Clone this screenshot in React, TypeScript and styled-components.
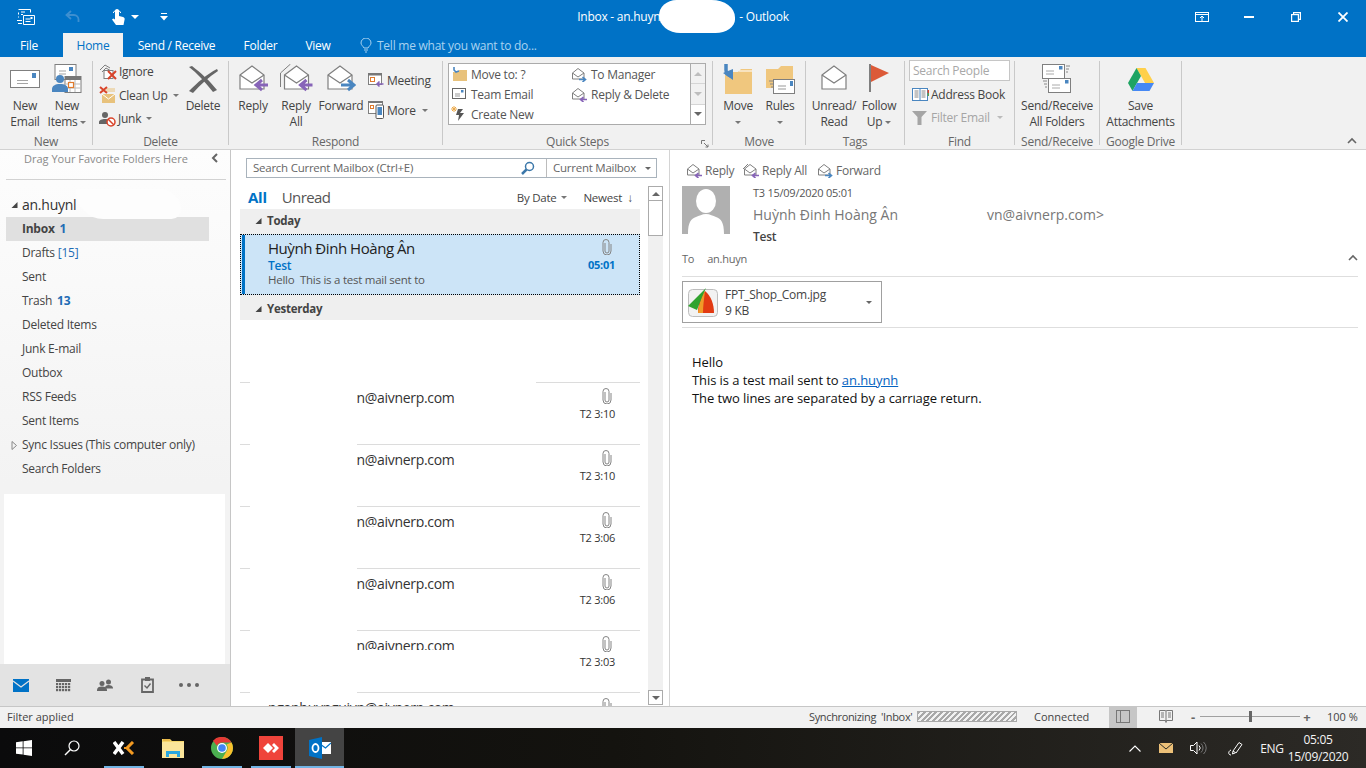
import React from "react";
import styled, { createGlobalStyle } from "styled-components";

const GlobalStyle = createGlobalStyle`
  html, body { margin: 0; padding: 0; width: 1366px; height: 768px; overflow: hidden; background: #fff; }
  body { font-family: "Open Sans", "Noto Sans", sans-serif; font-size: 12px; letter-spacing: -0.25px; color: #444; }
  #root { width: 1366px; height: 768px; }
  * { box-sizing: border-box; }
  svg { display: block; flex: none; }
`;

const Window = styled.div`display:flex;flex-direction:column;width:1366px;height:768px;overflow:hidden;`;

/* ---------- title bar ---------- */
const TitleBar = styled.div`display:grid;grid-template-columns:1fr auto 1fr;height:33px;background:#0072c6;color:#fff;align-items:center;`;
const Qat = styled.div`display:flex;align-items:center;`;
const QatItem = styled.span<{ $ml: number }>`margin-left:${p => p.$ml}px;display:flex;`;
const Title = styled.div`display:flex;align-items:center;font-size:12px;height:33px;color:#fff;white-space:nowrap;`;
const TitleBlob = styled.span`width:76px;height:33px;background:#fff;border-radius:18px 24px 20px 22px / 16px 18px 14px 18px;margin:0 4px 0 -1px;flex:none;`;
const WinControls = styled.div`display:flex;justify-content:flex-end;`;
const WinBtn = styled.div`width:47px;height:33px;display:flex;align-items:center;justify-content:center;`;

/* ---------- tabs ---------- */
const TabBar = styled.div`display:flex;height:24px;background:#0072c6;align-items:stretch;`;
const Tab = styled.div<{ $w: number; $active?: boolean; $ml?: number }>`
  width:${p => p.$w}px;margin-left:${p => p.$ml ?? 0}px;display:flex;align-items:center;justify-content:center;
  font-size:12px;color:${p => (p.$active ? "#0072c6" : "#fff")};background:${p => (p.$active ? "#f1f1f1" : "transparent")};
`;
const TellMe = styled.div`margin-left:15px;display:flex;align-items:center;gap:5px;color:#a9d2f0;font-size:12px;`;

/* ---------- ribbon ---------- */
const Ribbon = styled.div`display:flex;height:93px;padding-top:4px;background:#f1f1f1;border-bottom:1px solid #d2d2d2;flex:none;`;
const Group = styled.div<{ $w: number }>`position:relative;width:${p => p.$w}px;height:84px;border-right:1px solid #c9c9c9;flex:none;`;
const GroupBody = styled.div<{ $pl?: number }>`display:flex;height:72px;padding-left:${p => p.$pl ?? 0}px;`;
const GroupLabel = styled.div`height:12px;line-height:17px;text-align:center;font-size:12px;color:#666;white-space:nowrap;`;
const Launcher = styled.span`position:absolute;right:3px;bottom:-3px;`;
const LargeBtn = styled.div<{ $w: number }>`display:flex;flex-direction:column;align-items:center;width:${p => p.$w}px;margin-top:3px;flex:none;`;
const LargeIcon = styled.div<{ $pt?: number }>`height:34px;padding-top:${p => p.$pt ?? 0}px;display:flex;align-items:flex-start;justify-content:center;`;
const LargeText = styled.div`line-height:16px;text-align:center;font-size:12px;color:#444;white-space:nowrap;`;
const Caret = styled.span<{ $c?: string; $ml?: number }>`
  display:inline-block;vertical-align:middle;margin-left:${p => p.$ml ?? 3}px;width:0;height:0;
  border-left:3px solid transparent;border-right:3px solid transparent;border-top:3px solid ${p => p.$c ?? "#777"};
`;
const SmallCol = styled.div<{ $w: number; $pl?: number; $pt?: number; $mt?: number; $rh?: number }>`
  display:flex;flex-direction:column;width:${p => p.$w}px;padding-left:${p => p.$pl ?? 0}px;padding-top:${p => p.$pt ?? 0}px;margin-top:${p => p.$mt ?? 0}px;flex:none;
  & > div { height:${p => p.$rh ?? 23}px; }
`;
const SmallRow = styled.div<{ $muted?: boolean; $gap?: number; $pl?: number }>`
  display:flex;align-items:center;gap:${p => p.$gap ?? 2}px;padding-left:${p => p.$pl ?? 0}px;font-size:12px;white-space:nowrap;color:${p => (p.$muted ? "#a5a5a5" : "#444")};
`;
const Gallery = styled.div`display:flex;margin:2px 0 0 5px;width:258px;height:62px;border:1px solid #ababab;background:#fff;`;
const GalleryGrid = styled.div`display:grid;grid-template-columns:120px 1fr;grid-auto-rows:20px;flex:1;padding:0 0 0 2px;`;
const GalleryItem = styled.div`display:flex;align-items:center;gap:3px;font-size:12px;color:#555;white-space:nowrap;`;
const GalleryScroll = styled.div`width:15px;display:flex;flex-direction:column;border-left:1px solid #ababab;background:#f1f1f1;`;
const GalleryArrow = styled.div<{ $white?: boolean }>`flex:1;display:flex;align-items:center;justify-content:center;background:${p => (p.$white ? "#fff" : "#f1f1f1")};border-bottom:1px solid #d5d5d5;&:last-child{border-bottom:0;}`;
const SearchPeople = styled.div`&&{height:21px;}margin:-1px 0 2px;width:101px;border:1px solid #c6c6c6;background:#fff;color:#a8a8a8;font-size:12px;line-height:19px;padding-left:3px;`;
const Collapse = styled.div`margin-left:auto;margin-right:9px;align-self:flex-end;margin-bottom:3px;`;

/* ---------- main ---------- */
const Main = styled.div`display:grid;grid-template-columns:231px 439px 696px;height:556px;flex:none;overflow:hidden;`;

const Nav = styled.div`display:flex;flex-direction:column;border-right:1px solid #c6c6c6;background:linear-gradient(#fdfdfd,#f3f3f3 60%);height:556px;`;
const Favorites = styled.div`height:29.5px;margin:0 4px 0 6px;padding:0 6px 12px 18px;border-bottom:1px solid #d2d2d2;color:#8a8a8a;font-size:11px;letter-spacing:0;display:flex;align-items:center;justify-content:space-between;`;
const Account = styled.div`position:relative;display:flex;align-items:center;gap:4px;height:23px;margin:13px 0 1px 11px;font-size:14px;color:#333;`;
const AccountBlob = styled.span`position:absolute;left:65px;top:-4px;width:105px;height:30px;background:#fdfdfd;border-radius:0 30px 14px 40px;z-index:1;`;
const FolderList = styled.div`display:flex;flex-direction:column;`;
const Folder = styled.div<{ $active?: boolean }>`
  display:flex;align-items:center;position:relative;height:24px;width:203px;margin-left:6px;padding-left:16px;gap:5px;white-space:nowrap;
  font-size:12px;color:#444;background:${p => (p.$active ? "#e0e0e0" : "transparent")};font-weight:${p => (p.$active ? 700 : 400)};
`;
const Count = styled.span`color:#1f6db5;font-weight:700;`;
const Draft = styled.span`color:#1f6db5;margin-left:-2px;`;
const Expander = styled.span`position:absolute;left:5px;top:8px;`;
const WhiteBox = styled.div`flex:1;margin:13px 5px 0 4px;background:#fff;`;
const BottomNav = styled.div`display:flex;height:42px;background:#e3e3e3;flex:none;`;
const BottomItem = styled.div`width:42px;display:flex;align-items:center;justify-content:center;`;

const ListPane = styled.div`display:flex;flex-direction:column;border-right:1px solid #d4d4d4;background:#fff;height:556px;`;
const SearchWrap = styled.div`height:36px;padding:8px 0 0 15px;flex:none;`;
const SearchBox = styled.div`display:flex;align-items:center;width:411px;height:20px;border:1px solid #a9b3bc;font-size:11.5px;color:#666;`;
const SearchText = styled.div`flex:1;padding:0 0 2px 6px;`;
const SearchScope = styled.div`width:110px;height:18px;border-left:1px solid #bcbcbc;padding:0 5px 0 6px;display:flex;align-items:center;justify-content:space-between;line-height:18px;`;
const SearchGlass = styled.span`margin-right:11px;`;
const ListBody = styled.div`display:flex;padding-left:9px;height:520px;`;
const Messages = styled.div`width:400px;height:520px;overflow:hidden;flex:none;`;
const FilterRow = styled.div`display:flex;align-items:center;height:23px;padding:0 7px 1px 8px;`;
const FilterAll = styled.span`font-size:15px;font-weight:700;color:#0072c6;`;
const FilterUnread = styled.span`font-size:15px;color:#555;margin-left:15px;flex:1;letter-spacing:-0.6px;`;
const SortLabel = styled.span<{ $ml?: number }>`display:inline-flex;align-items:center;font-size:11.5px;color:#444;margin-left:${p => p.$ml ?? 0}px;`;
const GroupHeader = styled.div<{ $pb: number; $pt?: number }>`display:flex;align-items:center;gap:5px;height:25px;padding:${p => p.$pt ?? 0}px 0 ${p => p.$pb}px 15px;background:#efefef;font-weight:700;font-size:11.5px;color:#444;`;
const Selected = styled.div`position:relative;display:flex;justify-content:space-between;height:61px;background:#cce4f7;outline:1px dotted #000;outline-offset:-1px;padding:4px 25px 0 28px;
  &::before{content:"";position:absolute;left:2px;top:1px;bottom:1px;width:3px;background:#0072c6;}`;
const SelName = styled.div`font-size:15px;line-height:20px;color:#222;letter-spacing:-0.45px;`;
const SelSubject = styled.div`font-size:12px;line-height:16px;color:#0072c6;font-weight:600;`;
const SelPreview = styled.div`font-size:11.5px;line-height:16px;color:#555;margin-top:-2px;`;
const RowRight = styled.div`display:flex;flex-direction:column;align-items:flex-end;`;
const SelRight = styled(RowRight)`margin-top:1px;`;
const ClipSlot = styled.div`height:16px;margin:0 3px 2px 0;`;
const SelTime = styled.div`font-size:11px;line-height:16px;color:#0072c6;font-weight:700;`;
const RowGap = styled.div`height:62px;`;
const MailRow = styled.div`position:relative;display:flex;justify-content:space-between;height:62px;border-top:1px solid #dcdcdc;padding:5px 25px 0 28px;`;
const RowMask = styled.span<{ $w: number; $h: number }>`position:absolute;left:10px;top:-1px;width:${p => p.$w}px;height:${p => p.$h}px;background:#fff;`;
const Sender = styled.div<{ $h?: number }>`font-size:14px;line-height:20px;color:#333;white-space:nowrap;height:${p => p.$h ?? 20}px;overflow:hidden;letter-spacing:-0.3px;`;
const RowTime = styled.div`font-size:11px;line-height:16px;color:#333;`;
const Scroll = styled.div`display:flex;flex-direction:column;width:15px;height:519px;margin-left:8px;background:#f0f0f0;`;
const ScrollBtn = styled.div`height:15px;border:1px solid #ababab;background:#fff;display:flex;align-items:center;justify-content:center;flex:none;`;
const ScrollThumb = styled.div`height:35px;background:#fff;border:1px solid #ababab;border-top:0;flex:none;`;
const ScrollTrack = styled.div`flex:1;`;
const TriUp = styled.span`width:0;height:0;border-left:4px solid transparent;border-right:4px solid transparent;border-bottom:4px solid #666;`;
const TriDown = styled.span`width:0;height:0;border-left:4px solid transparent;border-right:4px solid transparent;border-top:4px solid #666;`;
const TriUpFaint = styled(TriUp)`border-bottom-color:#bdbdbd;`;
const TriDownFaint = styled(TriDown)`border-top-color:#bdbdbd;`;

const Reading = styled.div`display:flex;flex-direction:column;padding:0 8px 0 12px;background:#fff;height:556px;`;
const Actions = styled.div`display:flex;align-items:center;height:36px;padding:14px 0 9px 4px;flex:none;`;
const Action = styled.div<{ $w: number }>`display:flex;align-items:center;gap:2px;width:${p => p.$w}px;font-size:12px;color:#666;white-space:nowrap;`;
const Header = styled.div`display:flex;height:48px;flex:none;`;
const Avatar = styled.div`width:48px;height:48px;background:#b0b0b0;flex:none;`;
const HeaderText = styled.div`margin-left:23px;display:flex;flex-direction:column;flex:1;`;
const DateText = styled.div`font-size:11px;line-height:14px;color:#555;`;
const SenderLine = styled.div`display:flex;font-size:14px;line-height:22px;margin-top:4px;color:#777;white-space:nowrap;letter-spacing:0;`;
const SenderMail = styled.span`margin-left:89px;`;
const SubjectLine = styled.div`font-size:12px;line-height:16px;margin-top:3px;color:#444;font-weight:600;`;
const ToRow = styled.div`display:flex;align-items:center;height:22px;margin-top:14px;padding-bottom:2px;font-size:11px;color:#666;flex:none;`;
const ToName = styled.span`margin-left:13px;flex:1;`;
const Rule = styled.div`height:1px;background:#dedede;margin-top:6px;flex:none;`;
const Attachment = styled.div`display:flex;align-items:center;width:200px;height:42px;margin-top:4px;border:1px solid #a0a0a0;padding:0 9px 0 4px;flex:none;`;
const AttachText = styled.div`flex:1;margin-left:6px;padding-top:2px;font-size:12px;line-height:16px;color:#444;`;
const Rule2 = styled(Rule)`margin-top:4px;`;
const Body = styled.div`padding:25px 0 0 10px;font-size:13px;line-height:18px;color:#111;letter-spacing:-0.08px;`;
const BodyLink = styled.span`color:#0563c1;text-decoration:underline;`;
const BodyMaskWrap = styled.span`position:relative;`;
const BodyMask = styled.span`position:absolute;left:16px;top:-1px;width:60px;height:7px;background:#fff;`;

/* ---------- status ---------- */
const Status = styled.div`display:flex;align-items:center;height:22px;padding:0 9px 2px 7px;border-top:1px solid #c6c6c6;background:#f1f1f1;font-size:11px;color:#444;flex:none;letter-spacing:0;`;
const StatusLeft = styled.div`margin-right:auto;`;
const SyncText = styled.div`width:108px;white-space:nowrap;letter-spacing:-0.35px;`;
const SyncBar = styled.div`width:100px;height:11px;border:1px solid #a8a8a8;background:repeating-linear-gradient(135deg,#a8a8a8 0 2px,#f1f1f1 2px 4px);`;
const Connected = styled.div`width:75px;margin-left:17px;`;
const ViewBtn = styled.div<{ $on?: boolean; $ml?: number }>`display:flex;align-items:center;justify-content:center;width:28px;height:21px;margin:0 0 -2px ${p => p.$ml ?? 0}px;padding-bottom:2px;background:${p => (p.$on ? "#c6c6c6" : "transparent")};`;
const ZoomSign = styled.div`width:14px;text-align:center;font-size:13px;line-height:14px;font-weight:700;color:#666;`;
const ZoomTrack = styled.div`position:relative;width:100px;height:1px;background:#a0a0a0;`;
const ZoomThumb = styled.span`position:absolute;left:49px;top:-5px;width:3px;height:11px;background:#666;`;
const ZoomWrap = styled.div`display:flex;align-items:center;margin-left:6px;`;
const Percent = styled.div`width:30px;margin-left:13px;text-align:right;white-space:nowrap;`;

/* ---------- taskbar ---------- */
const Taskbar = styled.div`display:flex;height:40px;background:linear-gradient(90deg,#0b0b0c 0%,#14130f 45%,#2c2a26 100%);flex:none;color:#fff;`;
const TaskBtn = styled.div<{ $w: number; $ml?: number; $bar?: boolean; $active?: boolean }>`
  position:relative;display:flex;align-items:center;justify-content:center;width:${p => p.$w}px;margin-left:${p => p.$ml ?? 0}px;
  background:${p => (p.$active ? "#444" : "transparent")};
  &::after{content:"";display:${p => (p.$bar ? "block" : "none")};position:absolute;bottom:0;left:${p => (p.$active ? 0 : 5)}px;right:${p => (p.$active ? 0 : 4)}px;height:2px;background:#72b4e4;}
`;
const Tray = styled.div`display:flex;margin-left:auto;padding-right:16px;`;
const TraySlot = styled.div<{ $w: number }>`width:${p => p.$w}px;display:flex;align-items:center;justify-content:center;font-size:12px;color:#f4f4f4;`;
const Clock = styled.div`width:64px;text-align:center;font-size:12px;line-height:17px;color:#f4f4f4;padding-top:3px;letter-spacing:-0.3px;`;

/* ---------- icons ---------- */
const G = "#7f7f7f", P = "#8764b8", B = "#4a86c0", R = "#d9442a", O = "#e8c27c";

const Envelope = () => (
  <svg width="30" height="18" viewBox="0 0 30 18">
    <rect x=".5" y=".5" width="29" height="17" fill="#fff" stroke={G} />
    <rect x="22" y="3" width="4" height="5" fill={B} />
    <path d="M7 10.500h11M7 13.500h11" stroke="#a5a5a5" />
  </svg>
);
const OpenMail = ({ arrow }: { arrow?: string }) => (
  <g>
    <path d="M2 11 14 2l12 9v14H2z" fill="#fff" stroke={G} strokeWidth="1.2" />
    <path d="M2 11l12 8 12-8" fill="none" stroke={G} strokeWidth="1.2" />
    {arrow === "left" && <path d="M30 21H19m5-5-6 5 6 5" fill="none" stroke={P} strokeWidth="3" />}
    {arrow === "right" && <path d="M15 21h12m-5-5 6 5-6 5" fill="none" stroke={B} strokeWidth="3" />}
  </g>
);
const BigReply = () => <svg width="30" height="30" viewBox="0 0 30 30"><OpenMail arrow="left" /></svg>;
const BigReplyAll = () => (
  <svg width="34" height="30" viewBox="-3 0 33 30">
    <path d="M-2 9 8 0" fill="none" stroke={G} /><path d="M-2 9v14" stroke={G} />
    <OpenMail arrow="left" />
  </svg>
);
const BigForward = () => <svg width="30" height="30" viewBox="0 0 30 30"><OpenMail arrow="right" /></svg>;
const ReadMail = () => (
  <svg width="28" height="26" viewBox="0 0 28 26">
    <path d="M2 11 14 2l12 9v14H2z" fill="#fff" stroke={G} strokeWidth="1.2" />
    <path d="M2 11l12 8 12-8" fill="none" stroke={G} strokeWidth="1.2" />
  </svg>
);
const SmallOpen = ({ color, dir, all }: { color: string; dir: "l" | "r"; all?: boolean }) => (
  <svg width="17" height="15" viewBox="0 0 17 15">
    {all && <path d="M0 6 5 1" stroke={G} fill="none" />}
    <path d="M1.5 6 7 1.5 13 6v6H1.5z" fill="#fff" stroke={G} />
    <path d="M1.5 6 7 10l6-4" fill="none" stroke={G} />
    {dir === "l"
      ? <path d="M16 12.5H10m2.5-2.5-3 2.5 3 2.5" fill="none" stroke={color} strokeWidth="1.6" />
      : <path d="M8 12.5h6m-2.5-2.5 3 2.5-3 2.5" fill="none" stroke={color} strokeWidth="1.6" />}
  </svg>
);
const NewItems = () => (
  <svg width="30" height="30" viewBox="0 0 30 30">
    <rect x="3" y=".5" width="21" height="15" fill="#fff" stroke={G} />
    <rect x="17" y="3" width="4" height="4" fill={B} />
    <path d="M7 7h7M7 10h7" stroke="#a5a5a5" />
    <rect x="13" y="12.5" width="16" height="16" fill="#fff" stroke={G} />
    <rect x="13" y="12" width="16" height="4" fill="#777" />
    <path d="M18 16v12M23 16v12M13 20h16M13 24h16" stroke="#bbb" />
    <rect x="16.5" y="18.5" width="5" height="5" fill="#fff" stroke="#e07b2e" strokeWidth="1.2" />
    <circle cx="8" cy="15" r="4" fill={B} />
    <path d="M0 28v-3c0-3 3-5 8-5s8 2 8 5v3z" fill={B} />
  </svg>
);
const Ignore = () => (
  <svg width="18" height="16" viewBox="0 0 18 16">
    <path d="M1 6l5-5 5 3" fill="none" stroke={G} />
    <path d="M3 8l4-4 5 3" fill="none" stroke={G} />
    <rect x="5" y="6.5" width="9" height="8" fill="#fff" stroke={G} />
    <path d="M9 7l8 8M17 7l-8 8" stroke={R} strokeWidth="2" />
  </svg>
);
const CleanUp = () => (
  <svg width="18" height="18" viewBox="0 0 18 18">
    <path d="M3 8h13v9H3z" fill={O} />
    <path d="M3 8l6.5 5L16 8" fill="none" stroke="#fff" />
    <path d="M7 3h9M7 5h9" stroke={O} />
    <path d="M1 1l7 6M8 1 1 7" stroke={R} strokeWidth="2" />
  </svg>
);
const Junk = () => (
  <svg width="17" height="16" viewBox="0 0 17 16">
    <circle cx="6" cy="4" r="3" fill="#666" />
    <path d="M0 13v-2c0-2 3-3 6-3s6 1 6 3v2z" fill="#666" />
    <circle cx="12" cy="11" r="4" fill="#fff" stroke={R} strokeWidth="1.5" />
    <path d="M9 8l6 6" stroke={R} strokeWidth="1.5" />
  </svg>
);
const BigX = () => (
  <svg width="32" height="30" viewBox="0 0 32 30">
    <path d="M2 3C10 9 18 18 26 28l4-2C22 16 14 9 5 2z" fill="#666" />
    <path d="M30 5C20 10 10 19 2 27l4 2C13 21 22 13 31 7z" fill="#666" />
  </svg>
);
const Meeting = () => (
  <svg width="16" height="15" viewBox="0 0 16 15">
    <rect x=".5" y=".5" width="13" height="11" fill="#fff" stroke={G} />
    <rect x="0" y="0" width="14" height="2.5" fill="#777" />
    <rect x="2.5" y="4.5" width="4" height="4" fill="#fff" stroke="#e07b2e" />
    <path d="M15.5 11H9m2.5-2.5L9 11l2.5 2.5" fill="none" stroke={P} strokeWidth="1.6" />
  </svg>
);
const More = () => (
  <svg width="16" height="18" viewBox="0 0 16 18">
    <rect x=".5" y=".5" width="14" height="12" fill="#fff" stroke={G} />
    <rect x="0" y="0" width="15" height="2" fill="#777" />
    <rect x="2.5" y="4.5" width="3" height="3" fill="#fff" stroke="#e07b2e" />
    <rect x="8" y="4" width="7.5" height="13.5" rx="1" fill="#fff" stroke="#555" />
    <rect x="9.5" y="6" width="4.5" height="8" fill={B} />
  </svg>
);
const MoveSmall = () => (
  <svg width="17" height="15" viewBox="0 0 17 15">
    <path d="M2 5h5l1-2h8v11H2z" fill={O} />
    <path d="M3 0v3l2 2 3-1" fill="none" stroke={B} strokeWidth="1.6" />
  </svg>
);
const TeamMail = () => (
  <svg width="17" height="12" viewBox="0 0 17 12">
    <rect x="1.5" y=".5" width="13" height="10" fill="#fff" stroke="#666" />
    <rect x="10" y="2" width="2.5" height="2.5" fill={B} />
    <path d="M4 6h5M4 8h5" stroke="#999" />
  </svg>
);
const Bolt = () => (
  <svg width="17" height="16" viewBox="0 0 17 16">
    <path d="M1 1l4 4M5 1 1 5M3 0v6M0 3h6" stroke="#eba94b" />
    <path d="M12 3H7L5 9h3l-1 6 6-8H9z" fill="#555" />
  </svg>
);
const BigMove = () => (
  <svg width="30" height="30" viewBox="0 0 30 30">
    <path d="M2 8h13l3-3h11v25H2z" fill="#f0c77e" />
    <path d="M16 6h13v2H16z" fill="#fff" opacity=".5" />
    <path d="M3 0v6c0 3 1 5 5 6" fill="none" stroke={B} strokeWidth="3.5" />
    <path d="M0 9l10 7V5z" fill={B} />
  </svg>
);
const BigRules = () => (
  <svg width="30" height="30" viewBox="0 0 30 30">
    <path d="M1 5h12l3-3h12v22H1z" fill="#f0c77e" />
    <rect x="8.5" y="15.5" width="21" height="14" fill="#fff" stroke={G} />
    <rect x="25" y="17" width="3" height="5" fill={B} />
    <path d="M13 22h8M13 25h8" stroke="#999" />
    <path d="M4 17h4M5 20h3M6 23h2" stroke="#888" />
  </svg>
);
const Flag = () => (
  <svg width="20" height="30" viewBox="0 0 20 30">
    <rect x="0" y="0" width="2" height="28" fill={G} />
    <path d="M2 1l18 8L2 18z" fill="#dc5a38" />
  </svg>
);
const AddressBook = () => (
  <svg width="17" height="14" viewBox="0 0 17 14">
    <rect x=".5" y=".5" width="15" height="12" fill="#fff" stroke={B} />
    <path d="M8 .5v12" stroke={B} />
    <path d="M2.5 3h4M2.5 5h4M2.5 7h4M2.5 9h4M9.5 3h4M9.5 5h4M9.5 7h4M9.5 9h4" stroke="#888" />
    <rect x="15.5" y="2" width="1.5" height="3" fill={R} />
    <rect x="15.5" y="5" width="1.5" height="3" fill="#5a9e4c" />
  </svg>
);
const Funnel = () => (
  <svg width="15" height="14" viewBox="0 0 15 14"><path d="M0 0h15L9.500 6v8h-4V6z" fill="#a5a5a5" /></svg>
);
const SendRecv = () => (
  <svg width="30" height="30" viewBox="0 0 30 30">
    <rect x=".5" y=".5" width="22" height="14" fill="#fff" stroke={G} />
    <rect x="17" y="2" width="3.500" height="3.500" fill={B} />
    <path d="M4 7h8M4 10h8" stroke="#aaa" />
    <path d="M24 2h4M24 5h3M24 8h2" stroke="#888" />
    <rect x="6.500" y="14.500" width="22" height="14" fill="#fff" stroke={G} />
    <rect x="23" y="16" width="3.500" height="3.500" fill={B} />
    <path d="M10 21h8M10 24h8" stroke="#aaa" />
    <path d="M1 17h4M2 20h3M3 23h2" stroke="#888" />
  </svg>
);
const Drive = () => (
  <svg width="28" height="26" viewBox="0 0 28 26">
    <path d="M9.500 1h9L27 16h-9z" fill="#ffd04b" />
    <path d="M9.500 1 1 16l4.500 8L14 9z" fill="#1fa463" />
    <path d="M5.500 24 10 16h17l-4.500 8z" fill="#4688f4" />
  </svg>
);
const Paperclip = () => (
  <svg width="10" height="16" viewBox="0 0 10 16">
    <path d="M3 4v8a2 2 0 0 0 4 0V3.500a3 3 0 0 0-6 0V12a4 4 0 0 0 8 0V5" fill="none" stroke="#848484" />
  </svg>
);
const Glass = () => (
  <svg width="14" height="14" viewBox="0 0 14 14">
    <circle cx="8.500" cy="5.500" r="4" fill="none" stroke="#3c78aa" strokeWidth="1.500" />
    <path d="M5.500 8.500 1 13" stroke="#3c78aa" strokeWidth="2.500" />
  </svg>
);
const Tri = ({ hollow }: { hollow?: boolean }) => (
  <svg width="7" height="9" viewBox="0 0 7 9">
    {hollow ? <path d="M1 .5 5.500 4.500 1 8.500z" fill="none" stroke="#888" /> : <path d="M6.500 2v6H.5z" fill="#444" />}
  </svg>
);
const Chevron = ({ c = "#666", dir = "up" }: { c?: string; dir?: "up" | "left" }) => (
  <svg width="10" height="10" viewBox="0 0 10 10">
    {dir === "up" ? <path d="M1 7l4-4 4 4" fill="none" stroke={c} strokeWidth="1.600" /> : <path d="M7 1 3 5l4 4" fill="none" stroke={c} strokeWidth="2" />}
  </svg>
);

const TabBulb = () => (
  <svg width="12" height="15" viewBox="0 0 12 15">
    <path d="M4 10C3 8 1 7 1 5a5 5 0 0 1 10 0c0 2-2 3-3 5z" fill="none" stroke="#a9d2f0" />
    <path d="M4 12h4M5 14h2" stroke="#a9d2f0" />
  </svg>
);
const QatFolder = () => (
  <svg width="20" height="18" viewBox="0 0 20 18" fill="none" stroke="#fff">
    <path d="M2.500 1.500h12v3M2.500 4.500v2M2.500 8.500v1M1 12.500h5M2 15.500h4" />
    <path d="M7.500 7.500h11v9h-11z" />
    <path d="M9.500 11h5M9.500 13.500h5" />
    <rect x="14.500" y="9" width="2" height="2" fill="#fff" stroke="none" />
    <path d="M5 4h4M5 6.500h2" />
  </svg>
);
const QatUndo = () => (
  <svg width="16" height="13" viewBox="0 0 16 13" fill="none" stroke="#3d8fd0" strokeWidth="1.800">
    <path d="M6 1 1.500 5 6 9" /><path d="M2 5h7a4.500 4.500 0 0 1 4.500 4.500V12" />
  </svg>
);
const QatTouch = () => (
  <svg width="14" height="18" viewBox="0 0 14 18" fill="#fff">
    <path d="M4 3a2 2 0 0 1 4 0v5l4 1c1.500.5 2 1.500 1.500 3L12.500 17H5L1 11.500l1.200-1L4 11.500z" />
    <path d="M2.200 5a4 4 0 0 1 7.600 0" fill="none" stroke="#fff" />
  </svg>
);
const WhiteCaret = () => (
  <svg width="8" height="4" viewBox="0 0 8 4"><path d="M0 0h8L4 4z" fill="#fff" /></svg>
);
const QatCustom = () => (
  <svg width="8" height="8" viewBox="0 0 8 8"><path d="M1 .5h6" stroke="#fff" /><path d="M0 3h8L4 7.500z" fill="#fff" /></svg>
);
const BoxUp = () => (
  <svg width="14" height="10" viewBox="0 0 14 10" fill="none" stroke="#fff">
    <rect x=".5" y=".5" width="13" height="9" /><path d="M.5 2.500h13M7 9V4M5 6l2-2 2 2" />
  </svg>
);
const WinMin = () => <svg width="10" height="2" viewBox="0 0 10 2"><rect width="10" height="2" fill="#fff" /></svg>;
const WinRestore = () => (
  <svg width="10" height="10" viewBox="0 0 10 10" fill="none" stroke="#fff" strokeWidth="1.200">
    <rect x=".6" y="2.600" width="6.800" height="6.800" /><path d="M2.600 2.600V.6h6.800v6.800H7.400" />
  </svg>
);
const WinClose = () => (
  <svg width="10" height="10" viewBox="0 0 10 10"><path d="M.5.5l9 9M9.500.5l-9 9" stroke="#fff" strokeWidth="1.800" /></svg>
);
const LauncherIcon = () => (
  <svg width="8" height="8" viewBox="0 0 8 8" fill="none" stroke="#777"><path d="M.5 4V.5H4M3 3l4 4M7 4.500V7H4.500" /></svg>
);
const MailNav = () => (
  <svg width="16" height="13" viewBox="0 0 16 13"><rect width="16" height="13" fill="#0072c6" /><path d="M0 2l8 6 8-6" fill="none" stroke="#e3e3e3" strokeWidth="1.200" /></svg>
);
const CalNav = () => (
  <svg width="15" height="13" viewBox="0 0 15 13">
    <rect width="15" height="3" fill="#666" />
    {[4, 7, 10].map(y => [0, 3, 6, 9, 12].map(x => <rect key={`${x}-${y}`} x={x} y={y} width="2.200" height="2.200" fill="#666" />))}
  </svg>
);
const PeopleNav = () => (
  <svg width="16" height="12" viewBox="0 0 16 12" fill="#666">
    <circle cx="11.500" cy="3" r="2.500" /><path d="M8 9c0-2 1.500-3 3.500-3S16 7 16 9v.5H9z" />
    <circle cx="5" cy="4.500" r="2.500" /><path d="M0 11c0-2.500 2-3.500 5-3.500S10 8.500 10 11v1H0z" />
  </svg>
);
const TaskNav = () => (
  <svg width="13" height="16" viewBox="0 0 13 16">
    <path d="M1 2.500h11V15H1z" fill="none" stroke="#666" strokeWidth="1.800" />
    <rect x="4" y="0" width="5" height="4" fill="#666" />
    <path d="M3.500 8.500 6 11l3.500-4.500" fill="none" stroke="#666" strokeWidth="1.400" />
  </svg>
);
const DotsNav = () => (
  <svg width="20" height="4" viewBox="0 0 20 4" fill="#666"><circle cx="2" cy="2" r="2" /><circle cx="10" cy="2" r="2" /><circle cx="18" cy="2" r="2" /></svg>
);
const AvatarFig = () => (
  <svg width="48" height="48" viewBox="0 0 48 48">
    <ellipse cx="24" cy="15" rx="10" ry="12" fill="#fff" />
    <path d="M6 48c0-12 3-15 8-17 3-1 6-3 10-3s7 2 10 3c5 2 8 5 8 17z" fill="#fff" />
  </svg>
);
const FastStone = () => (
  <svg width="32" height="30" viewBox="0 0 32 30">
    <rect x="1.500" y="2.500" width="29" height="27" rx="4" fill="#f2f2f2" stroke="#bdbdbd" />
    <path d="M11 26C11 16 14 9 18 4c6 5 9 13 9 22z" fill="#e23a12" />
    <path d="M11 26C12 17 14 10 18 4c-1 8-2 15-2 22z" fill="#f09a28" />
    <path d="M1 19 13 7l6-6-4 9-5 13z" fill="#31a32f" />
  </svg>
);
const WinLogo = () => (
  <svg width="16" height="16" viewBox="0 0 16 16" fill="#fff">
    <path d="M0 2.300 6.700 1.300v6.200H0zM7.500 1.200 16 0v7.500H7.500zM0 8.300h6.700v6.300L0 13.700zM7.500 8.300H16V16l-8.500-1.200z" />
  </svg>
);
const SearchTask = () => (
  <svg width="16" height="16" viewBox="0 0 16 16" fill="none" stroke="#fff">
    <circle cx="10" cy="6" r="5" strokeWidth="1.200" /><path d="M6.500 9.500 1 15" strokeWidth="1.500" />
  </svg>
);
const XApp = () => (
  <svg width="22" height="14" viewBox="0 0 22 14">
    <path d="M1 1l9 12M10 1 1 13" stroke="#fff" strokeWidth="3.500" />
    <path d="M20 1l-6 6 6 6" fill="none" stroke="#f39a21" strokeWidth="3" />
    <path d="M11 7h4" stroke="#f39a21" strokeWidth="2" />
  </svg>
);
const Explorer = () => (
  <svg width="22" height="20" viewBox="0 0 22 20">
    <path d="M0 1h8l2 2h12v17H0z" fill="#f5d66b" />
    <path d="M0 4h22v16H0z" fill="#fbe59a" />
    <path d="M1 1h7v2H1z" fill="#e9b949" />
    <path d="M4 19v-6h14v6h-3v-3H7v3z" fill="#2aa7e0" />
  </svg>
);
const Chrome = () => (
  <svg width="22" height="22" viewBox="0 0 22 22">
    <circle cx="11" cy="11" r="11" fill="#4caf50" />
    <path d="M11 0a11 11 0 0 1 9.500 5.500H11a5.500 5.500 0 0 0-5 3.200L2 3.700A11 11 0 0 1 11 0z" fill="#e53935" />
    <path d="M20.500 5.500A11 11 0 0 1 11 22l4.800-8.300A5.500 5.500 0 0 0 15.500 7.500z" fill="#fbc02d" />
    <circle cx="11" cy="11" r="5" fill="#fff" /><circle cx="11" cy="11" r="3.800" fill="#4285f4" />
  </svg>
);
const AnyDesk = () => (
  <svg width="24" height="24" viewBox="0 0 24 24">
    <rect width="24" height="24" fill="#ef443b" />
    <path d="M9 7l5 5-5 5-5-5z" fill="#fff" /><path d="M15 7l5 5-5 5-2-2 3-3-3-3z" fill="#fff" />
  </svg>
);
const OutlookLogo = () => (
  <svg width="22" height="22" viewBox="0 0 22 22">
    <rect x="11" y="5" width="11" height="12" fill="#fff" />
    <path d="M11 7l5.500 4L22 6" fill="none" stroke="#0072c6" strokeWidth="1.200" />
    <path d="M0 3 13 0v22L0 19z" fill="#0072c6" />
    <ellipse cx="6.500" cy="11" rx="3" ry="4" fill="none" stroke="#fff" strokeWidth="1.800" />
  </svg>
);
const TrayChevron = () => <svg width="12" height="7" viewBox="0 0 12 7"><path d="M.5 6.500 6 1l5.500 5.500" fill="none" stroke="#fff" strokeWidth="1.100" /></svg>;
const TrayMail = () => (
  <svg width="14" height="10" viewBox="0 0 14 10"><rect width="14" height="10" fill="#ecc078" /><path d="M0 0l7 6 7-6" fill="none" stroke="#2c2a26" /></svg>
);
const Speaker = () => (
  <svg width="17" height="14" viewBox="0 0 17 14" fill="none">
    <path d="M.5 4.500h3L7 1v12L3.500 9.500h-3z" stroke="#fff" />
    <path d="M9 4.500a3.500 3.500 0 0 1 0 5" stroke="#fff" />
    <path d="M11 2.500a6 6 0 0 1 0 9M13.500 1a8 8 0 0 1 0 12" stroke="#777" />
  </svg>
);
const PenTray = () => (
  <svg width="16" height="15" viewBox="0 0 16 15" fill="none" stroke="#fff">
    <path d="M5 10 11 1.500l3 2L8 12z" /><path d="M5 10l-.5 3L7 12" />
    <path d="M3 9c-3 1-3 5 0 5" />
  </svg>
);
const PaneIcon = () => (
  <svg width="14" height="13" viewBox="0 0 14 13" fill="none" stroke="#777"><rect x=".5" y=".5" width="13" height="12" /><path d="M4.500 .5v12" /></svg>
);
const BookIcon = () => (
  <svg width="14" height="13" viewBox="0 0 14 13" fill="none" stroke="#777">
    <path d="M.5 .5h6l.5 1 .5-1h6v10h-6l-.5 2-.5-2h-6zM7 1.500v10M2 3h3M2 5h3M2 7h3M9 3h3M9 5h3M9 7h3" />
  </svg>
);

const ListRow = ({ time, h, first, last }: { time: string; h?: number; first?: boolean; last?: boolean }) => (
  <MailRow>
    {first && <RowMask $w={286} $h={1} />}
    <RowMask $w={107} $h={last ? 1 : 60} />
    <Sender $h={h}>nganhuynguiyn@aivnerp.com</Sender>
    <RowRight>
      <ClipSlot><Paperclip /></ClipSlot>
      <RowTime>{time}</RowTime>
    </RowRight>
  </MailRow>
);

export default function App() {
  const folders: React.ReactNode[] = [
    <>Sent</>,
    <>Trash <Count>13</Count></>,
    <>Deleted Items</>,
    <>Junk E-mail</>,
    <>Outbox</>,
    <>RSS Feeds</>,
    <>Sent Items</>,
  ];
  return (
    <Window>
      <GlobalStyle />
      <TitleBar>
        <Qat>
          <QatItem $ml={16}><QatFolder /></QatItem>
          <QatItem $ml={29}><QatUndo /></QatItem>
          <QatItem $ml={30}><QatTouch /></QatItem>
          <QatItem $ml={6}><WhiteCaret /></QatItem>
          <QatItem $ml={21}><QatCustom /></QatItem>
        </Qat>
        <Title>Inbox - an.huyn<TitleBlob />- Outlook</Title>
        <WinControls>
          <WinBtn><BoxUp /></WinBtn>
          <WinBtn><WinMin /></WinBtn>
          <WinBtn><WinRestore /></WinBtn>
          <WinBtn><WinClose /></WinBtn>
        </WinControls>
      </TitleBar>
      <TabBar>
        <Tab $w={58}>File</Tab>
        <Tab $w={60} $ml={5} $active>Home</Tab>
        <Tab $w={107}>Send / Receive</Tab>
        <Tab $w={61}>Folder</Tab>
        <Tab $w={54}>View</Tab>
        <TellMe><TabBulb />Tell me what you want to do...</TellMe>
      </TabBar>
      <Ribbon>
        <Group $w={93}>
          <GroupBody>
            <LargeBtn $w={50}>
              <LargeIcon $pt={6}><Envelope /></LargeIcon>
              <LargeText>New<br />Email</LargeText>
            </LargeBtn>
            <LargeBtn $w={34}>
              <LargeIcon><NewItems /></LargeIcon>
              <LargeText>New<br />Items<Caret /></LargeText>
            </LargeBtn>
          </GroupBody>
          <GroupLabel>New</GroupLabel>
        </Group>
        <Group $w={136}>
          <GroupBody $pl={6}>
            <SmallCol $w={84} $mt={-1} $rh={23.5}>
              <SmallRow><Ignore />Ignore</SmallRow>
              <SmallRow><CleanUp />Clean Up<Caret /></SmallRow>
              <SmallRow><Junk />Junk<Caret /></SmallRow>
            </SmallCol>
            <LargeBtn $w={40}>
              <LargeIcon><BigX /></LargeIcon>
              <LargeText>Delete</LargeText>
            </LargeBtn>
          </GroupBody>
          <GroupLabel>Delete</GroupLabel>
        </Group>
        <Group $w={214}>
          <GroupBody>
            <LargeBtn $w={48}><LargeIcon><BigReply /></LargeIcon><LargeText>Reply</LargeText></LargeBtn>
            <LargeBtn $w={38}><LargeIcon><BigReplyAll /></LargeIcon><LargeText>Reply<br />All</LargeText></LargeBtn>
            <LargeBtn $w={52}><LargeIcon><BigForward /></LargeIcon><LargeText>Forward</LargeText></LargeBtn>
            <SmallCol $w={70} $pl={1} $pt={4} $rh={30}>
              <SmallRow $gap={3}><Meeting />Meeting</SmallRow>
              <SmallRow $gap={3}><More />More<Caret /></SmallRow>
            </SmallCol>
          </GroupBody>
          <GroupLabel>Respond</GroupLabel>
        </Group>
        <Group $w={270}>
          <GroupBody>
            <Gallery>
              <GalleryGrid>
                <GalleryItem><MoveSmall />Move to: ?</GalleryItem>
                <GalleryItem><SmallOpen color={B} dir="r" />To Manager</GalleryItem>
                <GalleryItem><TeamMail />Team Email</GalleryItem>
                <GalleryItem><SmallOpen color={P} dir="l" />Reply &amp; Delete</GalleryItem>
                <GalleryItem><Bolt />Create New</GalleryItem>
              </GalleryGrid>
              <GalleryScroll>
                <GalleryArrow><TriUpFaint /></GalleryArrow>
                <GalleryArrow><TriDownFaint /></GalleryArrow>
                <GalleryArrow $white><TriDown /></GalleryArrow>
              </GalleryScroll>
            </Gallery>
          </GroupBody>
          <GroupLabel>Quick Steps</GroupLabel>
          <Launcher><LauncherIcon /></Launcher>
        </Group>
        <Group $w={93}>
          <GroupBody>
            <LargeBtn $w={50}><LargeIcon><BigMove /></LargeIcon><LargeText>Move<br /><Caret $ml={0} /></LargeText></LargeBtn>
            <LargeBtn $w={34}><LargeIcon><BigRules /></LargeIcon><LargeText>Rules<br /><Caret $ml={0} /></LargeText></LargeBtn>
          </GroupBody>
          <GroupLabel>Move</GroupLabel>
        </Group>
        <Group $w={99}>
          <GroupBody>
            <LargeBtn $w={56}><LargeIcon><ReadMail /></LargeIcon><LargeText>Unread/<br />Read</LargeText></LargeBtn>
            <LargeBtn $w={34}><LargeIcon><Flag /></LargeIcon><LargeText>Follow<br />Up<Caret /></LargeText></LargeBtn>
          </GroupBody>
          <GroupLabel>Tags</GroupLabel>
        </Group>
        <Group $w={110}>
          <GroupBody $pl={4}>
            <SmallCol $w={104}>
              <SearchPeople>Search People</SearchPeople>
              <SmallRow $gap={2} $pl={3}><AddressBook />Address Book</SmallRow>
              <SmallRow $gap={4} $pl={3} $muted><Funnel />Filter Email<Caret $c="#bbb" /></SmallRow>
            </SmallCol>
          </GroupBody>
          <GroupLabel>Find</GroupLabel>
        </Group>
        <Group $w={85}>
          <GroupBody>
            <LargeBtn $w={84}><LargeIcon><SendRecv /></LargeIcon><LargeText>Send/Receive<br />All Folders</LargeText></LargeBtn>
          </GroupBody>
          <GroupLabel>Send/Receive</GroupLabel>
        </Group>
        <Group $w={82}>
          <GroupBody>
            <LargeBtn $w={81}><LargeIcon $pt={3}><Drive /></LargeIcon><LargeText>Save<br />Attachments</LargeText></LargeBtn>
          </GroupBody>
          <GroupLabel>Google Drive</GroupLabel>
        </Group>
        <Collapse><Chevron /></Collapse>
      </Ribbon>
      <Main>
        <Nav>
          <Favorites>Drag Your Favorite Folders Here<Chevron dir="left" /></Favorites>
          <Account><Tri />an.huynl<AccountBlob /></Account>
          <FolderList>
            <Folder $active>Inbox <Count>1</Count></Folder>
            <Folder>Drafts <Draft>[15]</Draft></Folder>
            {folders.map((f, i) => <Folder key={i}>{f}</Folder>)}
            <Folder><Expander><Tri hollow /></Expander>Sync Issues (This computer only)</Folder>
            <Folder>Search Folders</Folder>
          </FolderList>
          <WhiteBox />
          <BottomNav>
            <BottomItem><MailNav /></BottomItem>
            <BottomItem><CalNav /></BottomItem>
            <BottomItem><PeopleNav /></BottomItem>
            <BottomItem><TaskNav /></BottomItem>
            <BottomItem><DotsNav /></BottomItem>
          </BottomNav>
        </Nav>
        <ListPane>
          <SearchWrap>
            <SearchBox>
              <SearchText>Search Current Mailbox (Ctrl+E)</SearchText>
              <SearchGlass><Glass /></SearchGlass>
              <SearchScope>Current Mailbox<Caret $c="#666" /></SearchScope>
            </SearchBox>
          </SearchWrap>
          <ListBody>
            <Messages>
              <FilterRow>
                <FilterAll>All</FilterAll>
                <FilterUnread>Unread</FilterUnread>
                <SortLabel>By Date<Caret $ml={5} /></SortLabel>
                <SortLabel $ml={16}>Newest&nbsp;&nbsp;↓</SortLabel>
              </FilterRow>
              <GroupHeader $pb={2}><Tri />Today</GroupHeader>
              <Selected>
                <div>
                  <SelName>Huỳnh Đinh Hoàng Ân</SelName>
                  <SelSubject>Test</SelSubject>
                  <SelPreview>Hello&nbsp; This is a test mail sent to</SelPreview>
                </div>
                <SelRight>
                  <ClipSlot><Paperclip /></ClipSlot>
                  <SelTime>05:01</SelTime>
                </SelRight>
              </Selected>
              <GroupHeader $pb={0} $pt={1}><Tri />Yesterday</GroupHeader>
              <RowGap />
              <ListRow time="T2 3:10" first />
              <ListRow time="T2 3:10" />
              <ListRow time="T2 3:06" h={15} />
              <ListRow time="T2 3:06" />
              <ListRow time="T2 3:03" h={14} />
              <ListRow time="" last />
            </Messages>
            <Scroll>
              <ScrollBtn><TriUp /></ScrollBtn>
              <ScrollThumb />
              <ScrollTrack />
              <ScrollBtn><TriDown /></ScrollBtn>
            </Scroll>
          </ListBody>
        </ListPane>
        <Reading>
          <Actions>
            <Action $w={57}><SmallOpen color={P} dir="l" />Reply</Action>
            <Action $w={74}><SmallOpen color={P} dir="l" all />Reply All</Action>
            <Action $w={70}><SmallOpen color={B} dir="r" />Forward</Action>
          </Actions>
          <Header>
            <Avatar><AvatarFig /></Avatar>
            <HeaderText>
              <DateText>T3 15/09/2020 05:01</DateText>
              <SenderLine>Huỳnh Đinh Hoàng Ân<SenderMail>vn@aivnerp.com&gt;</SenderMail></SenderLine>
              <SubjectLine>Test</SubjectLine>
            </HeaderText>
          </Header>
          <ToRow>To<ToName>an.huyn</ToName><Chevron /></ToRow>
          <Rule />
          <Attachment>
            <FastStone />
            <AttachText>FPT_Shop_Com.jpg<br />9 KB</AttachText>
            <Caret $c="#666" />
          </Attachment>
          <Rule2 />
          <Body>
            Hello<br />
            This is a test mail sent to <BodyLink>an.huynh</BodyLink><br />
            The two lines are separated by a <BodyMaskWrap>carriage return.<BodyMask /></BodyMaskWrap>
          </Body>
        </Reading>
      </Main>
      <Status>
        <StatusLeft>Filter applied</StatusLeft>
        <SyncText>Synchronizing &nbsp;'Inbox'</SyncText>
        <SyncBar />
        <Connected>Connected</Connected>
        <ViewBtn $on><PaneIcon /></ViewBtn>
        <ViewBtn $ml={15}><BookIcon /></ViewBtn>
        <ZoomWrap>
          <ZoomSign>-</ZoomSign>
          <ZoomTrack><ZoomThumb /></ZoomTrack>
          <ZoomSign>+</ZoomSign>
        </ZoomWrap>
        <Percent>100 %</Percent>
      </Status>
      <Taskbar>
        <TaskBtn $w={48}><WinLogo /></TaskBtn>
        <TaskBtn $w={48}><SearchTask /></TaskBtn>
        <TaskBtn $w={49} $ml={3} $bar><XApp /></TaskBtn>
        <TaskBtn $w={49}><Explorer /></TaskBtn>
        <TaskBtn $w={49} $bar><Chrome /></TaskBtn>
        <TaskBtn $w={49} $bar><AnyDesk /></TaskBtn>
        <TaskBtn $w={49} $bar $active><OutlookLogo /></TaskBtn>
        <Tray>
          <TraySlot $w={30}><TrayChevron /></TraySlot>
          <TraySlot $w={32}><TrayMail /></TraySlot>
          <TraySlot $w={32}><Speaker /></TraySlot>
          <TraySlot $w={44}><PenTray /></TraySlot>
          <TraySlot $w={28}>ENG</TraySlot>
          <Clock>05:05<br />15/09/2020</Clock>
        </Tray>
      </Taskbar>
    </Window>
  );
}
